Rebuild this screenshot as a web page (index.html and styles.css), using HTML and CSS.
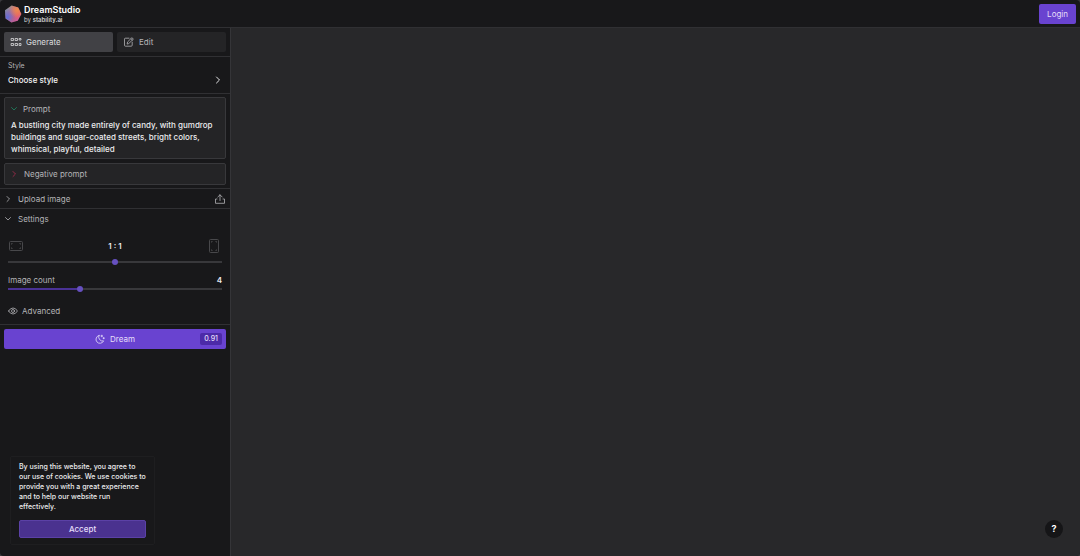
FILE: index.html
```html
<!DOCTYPE html>
<html lang="en">
<head>
  <meta charset="UTF-8">
  <meta name="viewport" content="width=device-width, initial-scale=1.0">
  <title>DreamStudio</title>
  <link rel="stylesheet" href="styles.css">
</head>
<body>
  <div class="app">
    <header class="header">
      <a class="brand" href="#">
        <svg class="logo" viewBox="0 0 18 18">
          <defs>
            <linearGradient id="base" x1="0" y1="0" x2="1" y2="1">
              <stop offset="0" stop-color="#6fae8c"/>
              <stop offset=".35" stop-color="#b9708f"/>
              <stop offset=".65" stop-color="#e8596a"/>
              <stop offset="1" stop-color="#b45fd0"/>
            </linearGradient>
            <radialGradient id="blue" cx=".15" cy=".7" r=".6">
              <stop offset="0" stop-color="#5f6fd8"/>
              <stop offset="1" stop-color="#5f6fd8" stop-opacity="0"/>
            </radialGradient>
            <radialGradient id="orange" cx=".75" cy=".25" r=".5">
              <stop offset="0" stop-color="#ee8a4c"/>
              <stop offset="1" stop-color="#ee8a4c" stop-opacity="0"/>
            </radialGradient>
          </defs>
          <path d="M7.6.6 14.2 2.4 17.4 9 13.8 15.8 7.4 17.4 1.6 13.4 1 5.2Z" fill="url(#base)"/>
          <path d="M7.6.6 14.2 2.4 17.4 9 13.8 15.8 7.4 17.4 1.6 13.4 1 5.2Z" fill="url(#blue)"/>
          <path d="M7.6.6 14.2 2.4 17.4 9 13.8 15.8 7.4 17.4 1.6 13.4 1 5.2Z" fill="url(#orange)"/>
        </svg>
        <span class="brand-text">
          <span class="brand-name">DreamStudio</span>
          <span class="brand-by">by <b>stability.ai</b></span>
        </span>
      </a>
      <button class="btn login" type="button">Login</button>
    </header>

    <div class="main">
      <aside class="sidebar">
        <nav class="tabs">
          <button class="tab active" type="button">
            <svg class="icon tab-icon" viewBox="0 0 12 10">
              <path d="M1.5 1.5h2v2h-2zM5.5 1.5h2v2h-2zM1.5 6.5h2v2h-2zM5.5 6.5h2v2h-2zM9.5 1.5h1.5v1.5H9.5zM9.5 6.5h1.5v2H9.5z"/>
            </svg>
            Generate
          </button>
          <button class="tab" type="button">
            <svg class="icon tab-icon" viewBox="0 0 12 10">
              <path d="M6 1.2H2.4Q1.5 1.2 1.5 2.1V8.2Q1.5 9.2 2.4 9.2H8.2Q9.2 9.2 9.2 8.2V5.2M4.2 6.7 4.6 4.9 8.9.7 10.4 2.1 6 6.3ZM7.9 1.7 9.4 3.1"/>
            </svg>
            Edit
          </button>
        </nav>

        <button class="style-picker" type="button">
          <span class="style-label">Style</span>
          <span class="style-value">
            Choose style
            <svg class="icon chevron bright" viewBox="0 0 8 8"><path d="M2.5 1 5.5 4 2.5 7"/></svg>
          </span>
        </button>

        <section class="prompts">
          <div class="prompt-box">
            <label class="prompt-head" for="prompt">
              <svg class="icon chevron green" viewBox="0 0 8 8"><path d="M1.5 2.5 4 5 6.5 2.5"/></svg>
              Prompt
            </label>
            <textarea id="prompt" class="prompt-input" rows="3" spellcheck="false">A bustling city made entirely of candy, with gumdrop buildings and sugar-coated streets, bright colors, whimsical, playful, detailed</textarea>
          </div>
          <button class="prompt-box prompt-head" type="button">
            <svg class="icon chevron red" viewBox="0 0 8 8"><path d="M3 1.5 5.5 4 3 6.5"/></svg>
            Negative prompt
          </button>
        </section>

        <div class="row upload">
          <button class="row-title" type="button">
            <svg class="icon chevron" viewBox="0 0 8 8"><path d="M3 1.5 5.5 4 3 6.5"/></svg>
            Upload image
          </button>
          <button type="button" aria-label="Upload">
            <svg class="icon upload-icon" viewBox="0 0 12 10"><path d="M6 6.5V.8M3.8 3 6 .8 8.2 3M3 5H1.5V9.3H10.5V5H9"/></svg>
          </button>
        </div>

        <section class="settings">
          <div class="row">
            <button class="row-title" type="button">
              <svg class="icon chevron" viewBox="0 0 8 8"><path d="M1.5 2.5 4 5 6.5 2.5"/></svg>
              Settings
            </button>
          </div>
          <div class="field">
            <div class="ratio-row">
              <svg class="ratio-icon" viewBox="0 0 16 16"><rect x="1.5" y="3.5" width="13" height="9" rx="1"/><path d="M3.5 6.5v-1h1M11.5 5.5h1v1M3.5 9.5v1h1M11.5 10.5h1v-1"/></svg>
              <label class="value" for="ratio">1 : 1</label>
              <svg class="ratio-icon" viewBox="0 0 16 16"><rect x="3.5" y="1.5" width="9" height="13" rx="1"/><path d="M5.5 4.5v-1h1M9.5 3.5h1v1M5.5 11.5v1h1M9.5 12.5h1v-1"/></svg>
            </div>
            <input id="ratio" class="slider" type="range" min="0" max="10" value="5">
          </div>
          <div class="field">
            <div class="count-row">
              <label for="count">Image count</label>
              <output class="value" for="count">4</output>
            </div>
            <input id="count" class="slider filled" type="range" min="1" max="10" value="4">
          </div>
          <button class="advanced" type="button">
            <svg class="icon eye" viewBox="0 0 10 8"><path d="M.6 4Q2.2 1 5 1T9.4 4Q7.8 7 5 7T.6 4Z"/><circle cx="5" cy="4" r="1.5"/></svg>
            Advanced
          </button>
        </section>

        <div class="dream-bar">
          <button class="btn dream" type="button">
            <svg class="icon moon" viewBox="0 0 10 10"><path d="M4 1.4A4 4 0 1 0 8.6 6.9 4 4 0 0 1 4 1.4ZM6.8 1.2v1.6M6 2h1.6M8.7 3.6v1.2M8.1 4.2h1.2"/></svg>
            <span>Dream</span>
            <span class="cost">0.91</span>
          </button>
        </div>

        <div class="cookies">
          <p>By using this website, you agree to our use of cookies. We use cookies to provide you with a great experience and to help our website run effectively.</p>
          <button class="btn accept" type="button">Accept</button>
        </div>
      </aside>

      <main class="canvas"></main>
    </div>
    <button class="help" type="button">?</button>
  </div>
</body>
</html>
```
FILE: styles.css
```css
* {
  box-sizing: border-box;
}
body {
  margin: 0;
  background: #3a3a3d;
  color: #b4b4b7;
  font: 8px/12px Inter, "Liberation Sans", sans-serif;
}
button {
  margin: 0;
  padding: 0;
  border: 0;
  background: none;
  color: inherit;
  font: inherit;
  text-align: left;
}
svg {
  display: block;
  flex: none;
}
.app {
  display: flex;
  flex-direction: column;
  min-height: 100vh;
  border-radius: 4px;
  overflow: hidden;
  background: #18181a;
}

/* header */
.header {
  display: flex;
  align-items: center;
  justify-content: space-between;
  height: 28px;
  padding: 0 4px;
  border-bottom: 1px solid #303033;
}
.brand {
  display: flex;
  align-items: center;
  gap: 2px;
  color: #fff;
  text-decoration: none;
}
.logo {
  width: 18px;
  height: 18px;
}
.brand-text {
  display: flex;
  flex-direction: column;
  padding-top: 2px;
}
.brand-name {
  font-size: 9px;
  line-height: 10px;
  font-weight: 600;
}
.brand-by {
  font-size: 6px;
  line-height: 10px;
  color: #d0d0d3;
}
.brand-by b {
  font-weight: 600;
}
.btn {
  border-radius: 2px;
  background: #6943d0;
  color: #e6dffa;
  text-align: center;
}
.login {
  height: 20px;
  padding: 0 8px;
}

/* sidebar */
.main {
  display: flex;
  flex: 1;
}
.sidebar {
  display: flex;
  flex-direction: column;
  width: 231px;
  border-right: 1px solid #353538;
}
.canvas {
  flex: 1;
  background: #28282a;
}
.icon {
  fill: none;
  stroke: currentColor;
  stroke-width: .8;
  stroke-linecap: round;
  stroke-linejoin: round;
}
.chevron {
  width: 8px;
  height: 8px;
}
.bright {
  color: #e4e4e6;
  stroke-width: 1;
}
.green {
  color: #1f8a66;
}
.red {
  color: #b02d50;
}
.tabs {
  display: flex;
  gap: 4px;
  padding: 4px;
  border-bottom: 1px solid #303033;
}
.tab {
  display: flex;
  flex: 1;
  align-items: center;
  gap: 4px;
  height: 20px;
  padding: 0 6px;
  border-radius: 2px;
  background: #242426;
}
.tab.active {
  background: #414145;
  color: #dcdcde;
}
.tab-icon {
  width: 12px;
  height: 10px;
}
.style-picker {
  display: flex;
  flex-direction: column;
  justify-content: center;
  gap: 2px;
  height: 37px;
  padding: 0 8px 4px;
  border-bottom: 1px solid #303033;
}
.style-label {
  font-size: 7px;
}
.style-value {
  display: flex;
  align-items: center;
  justify-content: space-between;
  width: 100%;
  color: #f4f4f5;
  font-weight: 500;
}
.prompts {
  display: flex;
  flex-direction: column;
  gap: 4px;
  padding: 3px 4px;
  border-bottom: 1px solid #303033;
}
.prompt-box {
  border: 1px solid #38383b;
  border-radius: 2px;
  background: #242426;
}
.prompt-head {
  display: flex;
  align-items: center;
  gap: 6px;
  height: 22px;
  padding: 0 5px;
}
.prompt-box > .prompt-head {
  height: 21px;
  gap: 5px;
}
.prompt-input {
  display: block;
  width: 100%;
  height: 39px;
  padding: 0 6px;
  border: 0;
  outline: 0;
  resize: none;
  overflow: hidden;
  background: none;
  color: #ececee;
  font: inherit;
  font-weight: 500;
}
.row {
  display: flex;
  align-items: center;
  justify-content: space-between;
  height: 20px;
  padding: 0 4px;
}
.upload {
  border-bottom: 1px solid #303033;
}
.row-title {
  display: flex;
  align-items: center;
  gap: 6px;
}
.upload-icon {
  width: 12px;
  height: 10px;
}

/* settings */
.settings {
  display: flex;
  flex-direction: column;
  height: 116px;
  border-bottom: 1px solid #303033;
}
.field {
  padding: 0 8px;
}
.ratio-row,
.count-row {
  display: flex;
  align-items: center;
  justify-content: space-between;
  padding-top: 9px;
}
.ratio-icon {
  width: 16px;
  height: 16px;
  fill: none;
  stroke: #48484b;
}
.value {
  color: #ececee;
  font-weight: 600;
}
.slider {
  display: block;
  width: 100%;
  height: 6px;
  margin: 0;
  appearance: none;
  background: linear-gradient(#38383b, #38383b) center / 100% 2px no-repeat;
}
.slider.filled {
  background: linear-gradient(90deg, #4a3296 34%, #38383b 34%) center / 100% 2px no-repeat;
}
.slider::-webkit-slider-thumb {
  appearance: none;
  width: 6px;
  height: 6px;
  border-radius: 50%;
  background: #6650c0;
}
.ratio-row + .slider {
  margin-top: 5px;
}
.advanced {
  display: flex;
  align-items: center;
  gap: 4px;
  padding: 13px 8px 0;
}
.eye {
  width: 10px;
  height: 8px;
}
.dream-bar {
  padding: 4px;
}
.dream {
  display: flex;
  position: relative;
  align-items: center;
  justify-content: center;
  gap: 5px;
  width: 100%;
  height: 20px;
}
.moon {
  width: 10px;
  height: 10px;
}
.cost {
  position: absolute;
  right: 4px;
  padding: 0 4px;
  border-radius: 2px;
  background: #4c2aa8;
  font-size: 7px;
  font-weight: 500;
}

/* cookie notice */
.cookies {
  width: 145px;
  margin: auto 0 11px 10px;
  padding: 5px 8px 6px;
  border: 1px solid #1e1e20;
  border-radius: 2px;
  color: #ececee;
  font-size: 7px;
  line-height: 10px;
  font-weight: 500;
}
.cookies p {
  margin: 0 0 8px;
}
.accept {
  display: block;
  width: 100%;
  height: 18px;
  border: 1px solid #5b41a6;
  background: #4a328f;
  font-size: 8px;
}
.help {
  position: fixed;
  right: 17px;
  bottom: 18px;
  width: 18px;
  height: 18px;
  border-radius: 50%;
  background: #151517;
  color: #fff;
  font-size: 9px;
  font-weight: 700;
  text-align: center;
}
```
